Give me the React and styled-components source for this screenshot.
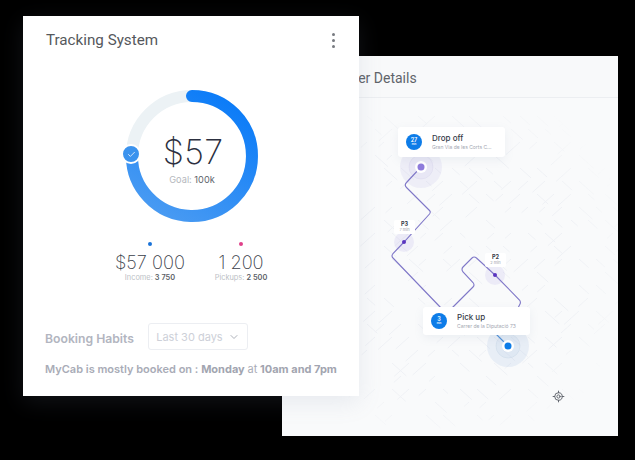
import React from 'react';
import styled, { createGlobalStyle } from 'styled-components';
import { Check, ChevronDown, LocateFixed } from 'lucide-react';

const GlobalStyle = createGlobalStyle`
  html, body {
    margin: 0;
    padding: 0;
    background: #000;
  }
`;

const Stage = styled.div`
  position: relative;
  width: 635px;
  height: 460px;
  background: #000;
  overflow: hidden;
  font-family: 'Roboto', sans-serif;
`;

const BackWindow = styled.section`
  position: absolute;
  left: 282px;
  top: 56px;
  width: 336px;
  height: 380px;
  display: flex;
  flex-direction: column;
  background: #f9fafb;
`;

const FrontWindow = styled.section`
  position: absolute;
  left: 23px;
  top: 16px;
  width: 336px;
  height: 380px;
  display: flex;
  flex-direction: column;
  background: #fff;
  box-shadow: 0 6px 22px rgba(120, 135, 160, 0.14);
`;

const BackHeader = styled.header`
  height: 42px;
  box-sizing: border-box;
  padding: 14px 0 0 54px;
  border-bottom: 1px solid #eceef1;
  font-size: 14px;
  line-height: 17px;
  color: #60646a;
  background: #f8f9fa;
`;

const MapArea = styled.div`
  position: relative;
  flex: 1;
`;

const MapDrawing = styled.svg`
  position: absolute;
  inset: 0;
  display: block;
`;

const Callout = styled.div`
  position: absolute;
  left: ${p => p.$x}px;
  top: ${p => p.$y}px;
  width: 107px;
  height: ${p => p.$h}px;
  box-sizing: border-box;
  padding-left: 8px;
  display: flex;
  align-items: center;
  gap: 10px;
  background: #fff;
  border-radius: 3px;
  box-shadow: 0 3px 10px rgba(130, 145, 175, 0.11);
`;

const TimeBadge = styled.div`
  width: 16px;
  height: 16px;
  flex: none;
  border-radius: 50%;
  background: #0d7ce8;
  color: #fff;
  display: flex;
  flex-direction: column;
  align-items: center;
  justify-content: center;
  font-family: 'Inter', sans-serif;
  font-size: 5.5px;
  line-height: 5px;
  font-weight: 600;
  small {
    font-size: 2.5px;
    line-height: 3px;
  }
`;

const CalloutTitle = styled.div`
  font-family: 'Inter', sans-serif;
  font-size: 8px;
  line-height: 10px;
  font-weight: 500;
  color: #363a48;
`;

const CalloutSub = styled.div`
  font-family: 'Inter', sans-serif;
  font-size: 5px;
  line-height: 8px;
  white-space: nowrap;
  color: #a3a7b2;
`;

const StopLabel = styled.div`
  position: absolute;
  left: ${p => p.$x}px;
  top: ${p => p.$y}px;
  width: 21px;
  height: 13px;
  background: #fff;
  border-radius: 2px;
  text-align: center;
  font-family: 'Inter', sans-serif;
  font-size: 5.5px;
  line-height: 6px;
  font-weight: 700;
  color: #363a48;
  padding-top: 1px;
  small {
    display: block;
    font-size: 4px;
    line-height: 5px;
    font-weight: 400;
    color: #9a9ea9;
  }
`;

const LocateButton = styled.div`
  position: absolute;
  right: 53px;
  bottom: 33px;
  width: 13px;
  height: 13px;
  color: #62666e;
  display: flex;
`;

const CardHeader = styled.header`
  display: flex;
  align-items: center;
  justify-content: space-between;
  padding: 16px 24px 0 23px;
  height: 17px;
`;

const CardTitle = styled.h2`
  margin: 0;
  font-size: 15.2px;
  line-height: 17px;
  font-weight: 400;
  color: #55585c;
`;

const Kebab = styled.div`
  display: flex;
  flex-direction: column;
  gap: 2.5px;
  i {
    width: 3.5px;
    height: 3.5px;
    border-radius: 50%;
    background: #777a80;
  }
`;

const RingBlock = styled.div`
  position: relative;
  width: 140px;
  height: 140px;
  margin: 37px auto 0;
  left: 1px;
`;

const RingCenter = styled.div`
  position: absolute;
  inset: 0;
  display: flex;
  flex-direction: column;
  align-items: center;
  justify-content: center;
  padding-top: 4px;
  box-sizing: border-box;
`;

const RingAmount = styled.div`
  font-family: 'Inter', sans-serif;
  font-size: 34px;
  line-height: 40px;
  font-weight: 200;
  letter-spacing: 0.3px;
  padding-left: 2px;
  color: #2c3040;
`;

const RingGoal = styled.div`
  font-family: 'Inter', sans-serif;
  font-size: 9.2px;
  line-height: 11px;
  margin-top: 2px;
  color: #b5b8bd;
  b {
    font-weight: 400;
    color: #61646c;
  }
`;

const CheckBadge = styled.div`
  position: absolute;
  left: -1px;
  top: 58px;
  width: 16px;
  height: 16px;
  border: 2px solid #fff;
  border-radius: 50%;
  background: #3b93ee;
  color: #fff;
  display: flex;
  align-items: center;
  justify-content: center;
`;

const Stats = styled.div`
  display: grid;
  grid-template-columns: 91px 91px;
  justify-content: center;
  margin: 16px 0 0 9px;
`;

const Stat = styled.div`
  display: flex;
  flex-direction: column;
  align-items: center;
`;

const StatDot = styled.span`
  width: 4px;
  height: 4px;
  border-radius: 50%;
  background: ${p => p.$color};
`;

const StatValue = styled.div`
  font-family: 'Inter', sans-serif;
  font-size: 18.2px;
  line-height: 20px;
  font-weight: 200;
  margin-top: 6px;
  color: #3a3e4a;
  white-space: nowrap;
`;

const StatNote = styled.div`
  font-family: 'Inter', sans-serif;
  font-size: 7.4px;
  line-height: 10px;
  margin-top: 1px;
  white-space: nowrap;
  color: #bcbfc6;
  b {
    font-weight: 600;
    color: #5c5f68;
  }
`;

const HabitRow = styled.div`
  display: flex;
  align-items: center;
  gap: 14px;
  margin: 40px 0 0 22px;
`;

const HabitTitle = styled.div`
  font-family: 'Inter', sans-serif;
  font-size: 12.2px;
  font-weight: 600;
  padding-top: 3px;
  color: #b2b5c0;
`;

const RangeSelect = styled.div`
  width: 100px;
  height: 27px;
  box-sizing: border-box;
  display: flex;
  align-items: center;
  justify-content: center;
  gap: 5px;
  border: 1px solid #eceef2;
  border-radius: 3px;
  font-family: 'Inter', sans-serif;
  font-size: 11px;
  color: #cdd0d8;
  svg {
    color: #aeb2ba;
  }
`;

const HabitNote = styled.p`
  margin: 12px 0 0 22px;
  font-family: 'Inter', sans-serif;
  font-size: 11px;
  line-height: 14px;
  font-weight: 600;
  white-space: nowrap;
  color: #a9acb7;
  span {
    font-weight: 400;
  }
  b {
    font-weight: 700;
    color: #a2a5b0;
  }
`;

// faint street strokes, scattered with a small hash so the blocks don't line up
const rnd = (a, b) => {
  const v = Math.sin(a * 12.9898 + b * 78.233) * 43758.5453;
  return v - Math.floor(v);
};
const streets = [];
for (let a = 0; a < 22; a++) {
  for (let b = 0; b < 24; b++) {
    const cx = a * 17 + (b % 2) * 8;
    const cy = 18 + b * 13;
    if (rnd(a, b) < 0.3) continue;
    const len = 5 + rnd(b, a) * 10;
    const dir = rnd(a + 3, b + 7) > 0.5 ? 1 : -1;
    streets.push([cx, cy, cx + len * dir, cy + len * 0.9]);
  }
}

const route1 =
  'M139 69 L124.5 84.5 Q122 87 124.5 89.5 L147.5 112.5 Q149 114 147.5 116 L122 144 L111 155.5 Q109 158 111 160 L160 211';
const route2 =
  'M169 211 L191 189 Q193 187 191 184.5 L181 174 Q179 171 181 169 L190 160 Q192 158 194.5 160 L213 177 L237.5 202 Q239 204 238 206 L236 210';

export default function App() {
  return (
    <Stage>
      <GlobalStyle />
      <BackWindow>
        <BackHeader>Order Details</BackHeader>
        <MapArea>
          <MapDrawing width="336" height="338" viewBox="0 0 336 338">
            <defs>
              <radialGradient id="fade" cx="0.5" cy="0.5" r="0.55">
                <stop offset="0.7" stopColor="#fff" stopOpacity="1" />
                <stop offset="1" stopColor="#fff" stopOpacity="0" />
              </radialGradient>
              <mask id="streetMask">
                <rect width="336" height="338" fill="url(#fade)" />
              </mask>
            </defs>
            <g mask="url(#streetMask)" stroke="#eff1f5" strokeWidth="1" fill="none">
              {streets.map((s, i) => (
                <line key={i} x1={s[0]} y1={s[1]} x2={s[2]} y2={s[3]} />
              ))}
            </g>

            <circle cx="139" cy="69" r="21" fill="#8a78d8" fillOpacity="0.09" />
            <circle cx="139" cy="69" r="12" fill="#8a78d8" fillOpacity="0.06" stroke="#dedbef" strokeWidth="0.6" />
            <circle cx="122" cy="144" r="10" fill="#8a78d8" fillOpacity="0.11" />
            <circle cx="213" cy="177" r="10" fill="#8a78d8" fillOpacity="0.11" />
            <circle cx="226" cy="248" r="21" fill="#7aa5dc" fillOpacity="0.13" />
            <circle cx="226" cy="248" r="12" fill="#7aa5dc" fillOpacity="0.08" stroke="#cfdcea" strokeWidth="0.6" />

            <path d={route1} fill="none" stroke="#7f77c8" strokeWidth="1.1" />
            <path d={route2} fill="none" stroke="#7f77c8" strokeWidth="1.1" />
            <path d="M214 236 L226 248" fill="none" stroke="#4f90d8" strokeWidth="1.1" />

            <circle cx="139" cy="69" r="6" fill="#fff" />
            <circle cx="139" cy="69" r="3.5" fill="#8f7cdc" />
            <circle cx="122" cy="144" r="2" fill="#5a35c0" />
            <circle cx="213" cy="177" r="2" fill="#5a35c0" />
            <circle cx="226" cy="248" r="6" fill="#fff" />
            <circle cx="226" cy="248" r="3.5" fill="#0d7ce8" />
          </MapDrawing>

          <Callout $x={116} $y={29} $h={30}>
            <TimeBadge>27<small>min</small></TimeBadge>
            <div>
              <CalloutTitle>Drop off</CalloutTitle>
              <CalloutSub>Gran Via de les Corts C...</CalloutSub>
            </div>
          </Callout>
          <Callout $x={141} $y={209} $h={28}>
            <TimeBadge>3<small>min</small></TimeBadge>
            <div>
              <CalloutTitle>Pick up</CalloutTitle>
              <CalloutSub>Carrer de la Diputació 73</CalloutSub>
            </div>
          </Callout>
          <StopLabel $x={112} $y={122}>P3<small>7 min</small></StopLabel>
          <StopLabel $x={203} $y={155}>P2<small>2 min</small></StopLabel>
          <LocateButton><LocateFixed size={13} strokeWidth={1.8} /></LocateButton>
        </MapArea>
      </BackWindow>

      <FrontWindow>
        <CardHeader>
          <CardTitle>Tracking System</CardTitle>
          <Kebab><i /><i /><i /></Kebab>
        </CardHeader>
        <RingBlock>
          <svg width="140" height="140" viewBox="0 0 140 140">
            <defs>
              <linearGradient id="ringFill" x1="0.8" y1="0" x2="0.2" y2="1">
                <stop offset="0" stopColor="#0a7bf8" />
                <stop offset="1" stopColor="#4a9bf2" />
              </linearGradient>
            </defs>
            <circle cx="70" cy="70" r="60" fill="none" stroke="#ecf2f5" strokeWidth="12" />
            <path
              d="M70 10 A60 60 0 1 1 10 68"
              fill="none"
              stroke="url(#ringFill)"
              strokeWidth="12"
              strokeLinecap="round"
            />
          </svg>
          <RingCenter>
            <RingAmount>$57</RingAmount>
            <RingGoal>Goal: <b>100k</b></RingGoal>
          </RingCenter>
          <CheckBadge><Check size={9} strokeWidth={2} /></CheckBadge>
        </RingBlock>
        <Stats>
          <Stat>
            <StatDot $color="#1a73d8" />
            <StatValue>$57 000</StatValue>
            <StatNote>Income: <b>3 750</b></StatNote>
          </Stat>
          <Stat>
            <StatDot $color="#e0408a" />
            <StatValue>1 200</StatValue>
            <StatNote>Pickups: <b>2 500</b></StatNote>
          </Stat>
        </Stats>
        <HabitRow>
          <HabitTitle>Booking Habits</HabitTitle>
          <RangeSelect>Last 30 days <ChevronDown size={12} /></RangeSelect>
        </HabitRow>
        <HabitNote>
          MyCab is mostly booked on : <b>Monday</b> <span>at</span> <b>10am and 7pm</b>
        </HabitNote>
      </FrontWindow>
    </Stage>
  );
}
